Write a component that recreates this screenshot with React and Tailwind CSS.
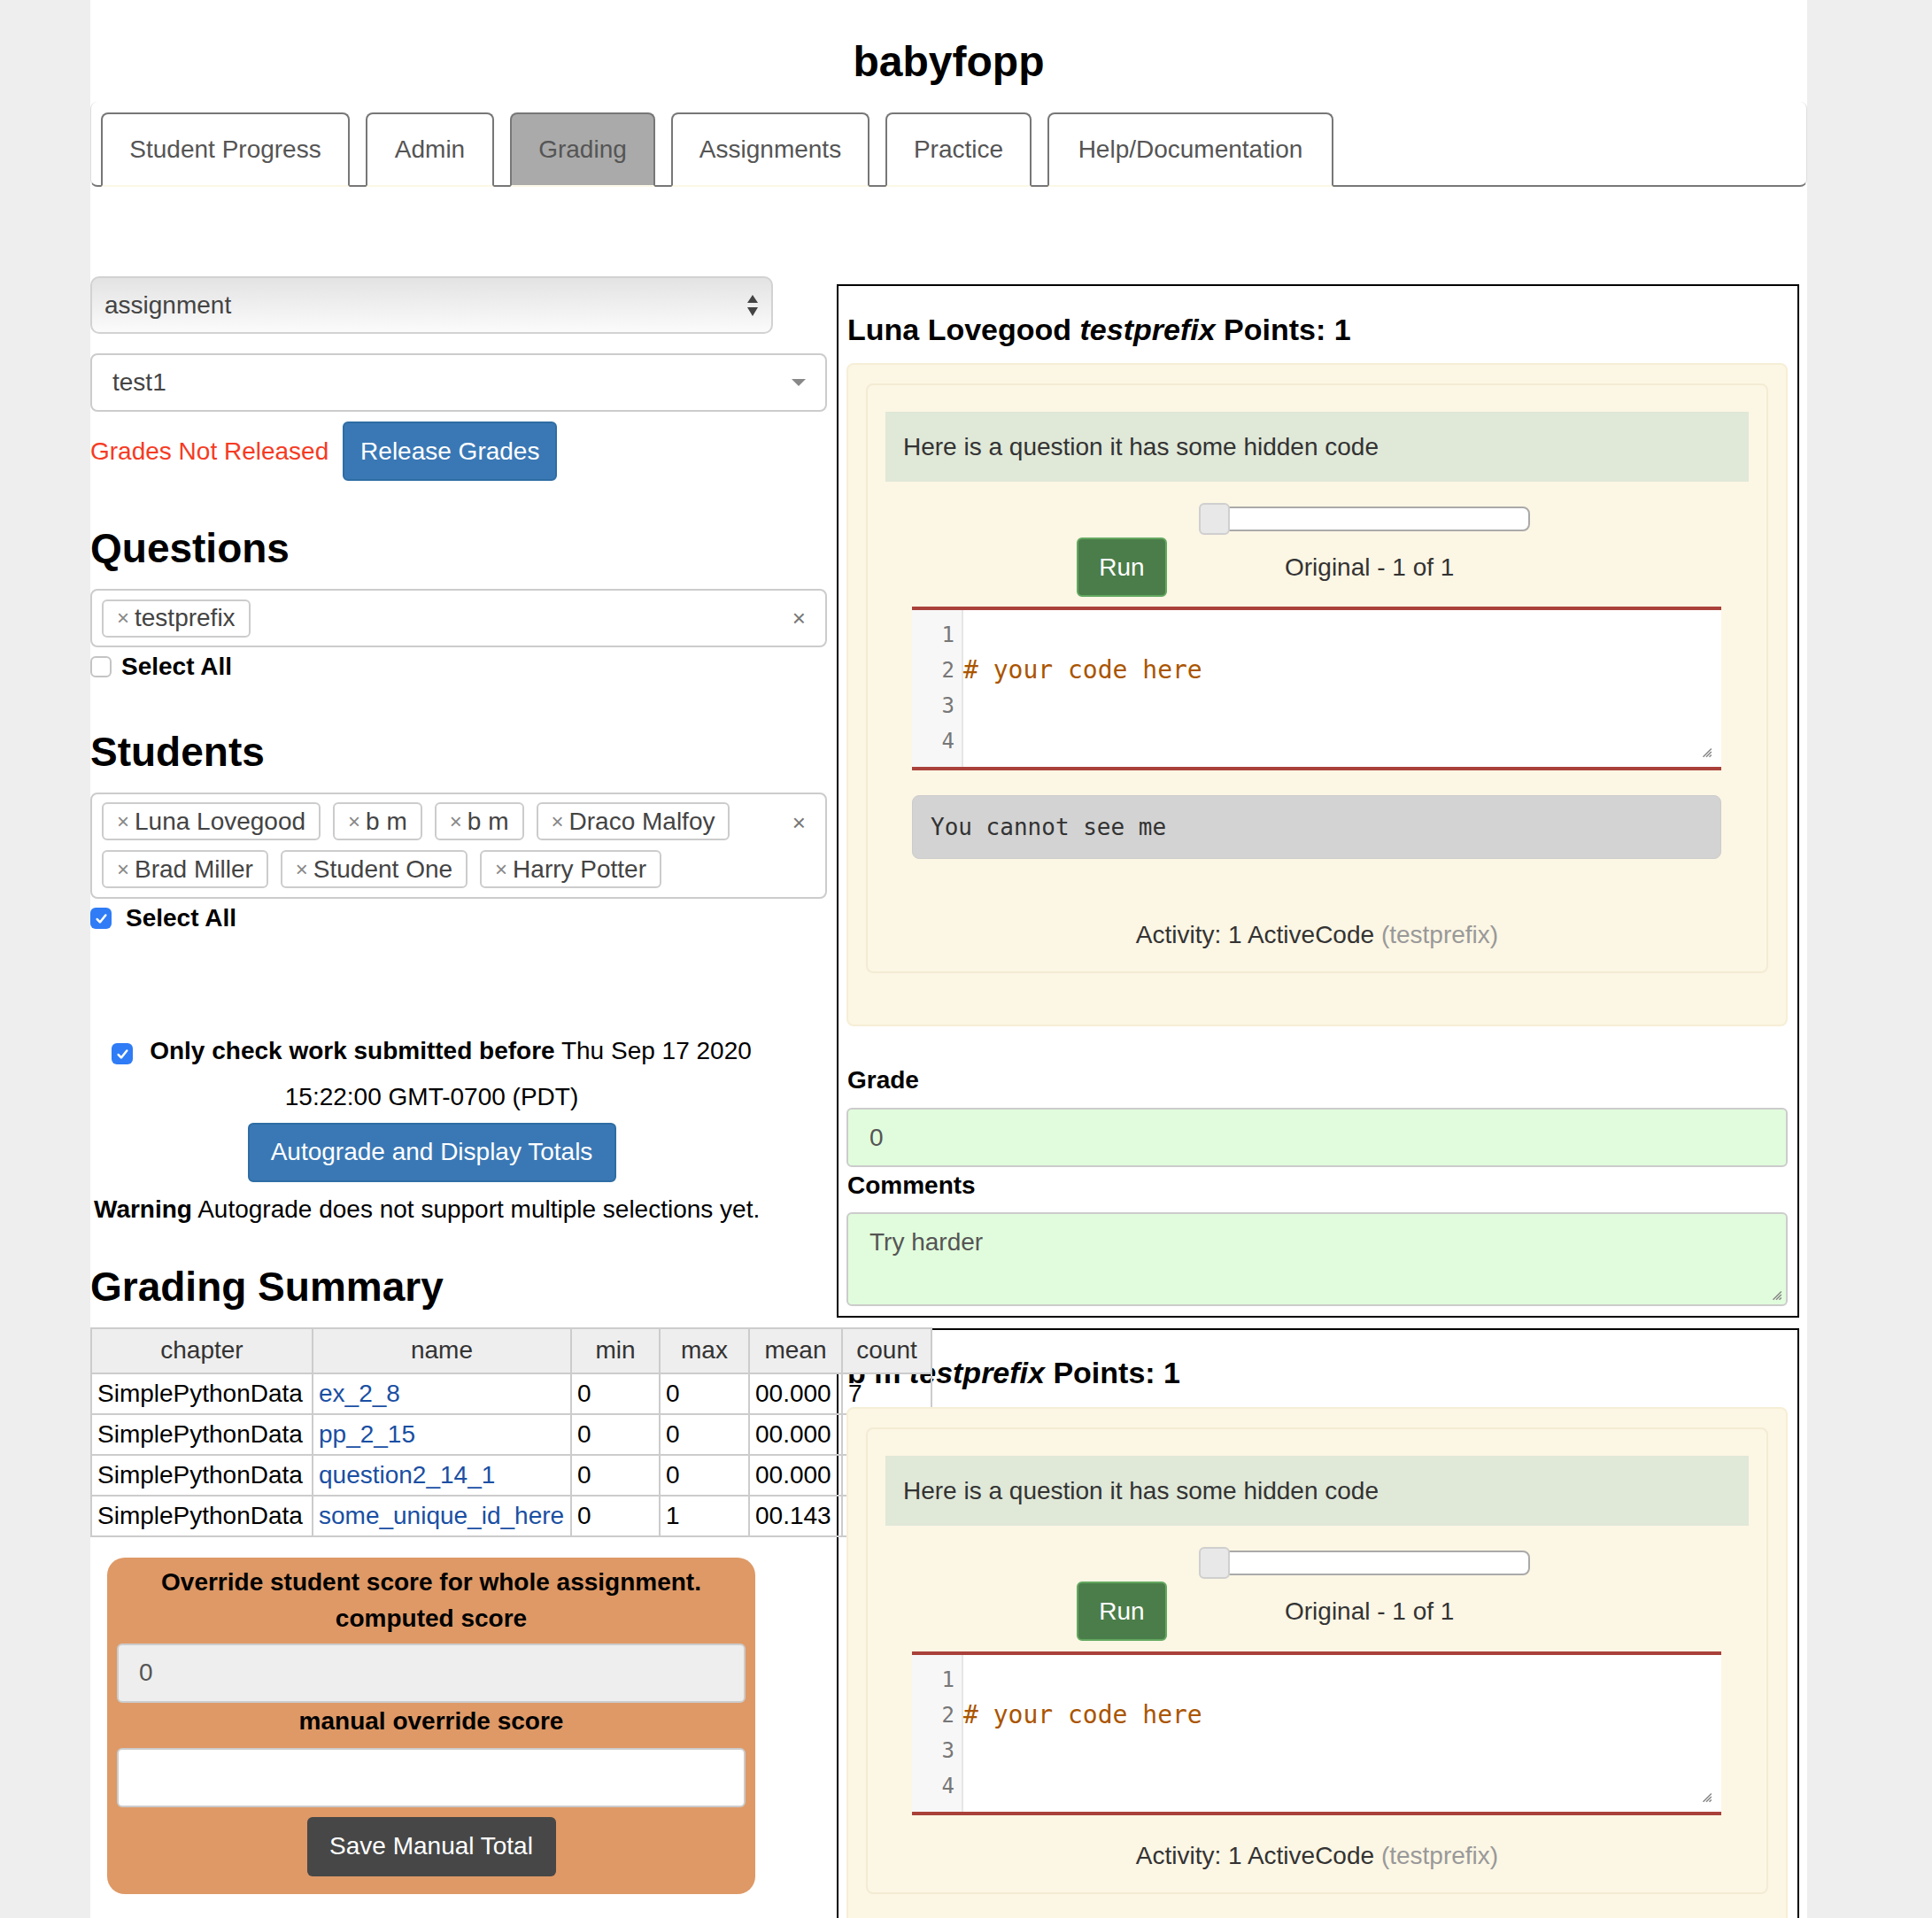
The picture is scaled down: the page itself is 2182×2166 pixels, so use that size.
import React from "react";

const tabs = [
  ["Student Progress", "w-[281px]"],
  ["Admin", "w-[145px]"],
  ["Grading", "w-[164px]"],
  ["Assignments", "w-[224px]"],
  ["Practice", "w-[165px]"],
  ["Help/Documentation", "w-[323px]"],
];

const students = ["Luna Lovegood", "b m", "b m", "Draco Malfoy", "Brad Miller", "Student One", "Harry Potter"];

const rows = [
  ["SimplePythonData", "ex_2_8", "0", "0", "00.000", "7"],
  ["SimplePythonData", "pp_2_15", "0", "0", "00.000", "7"],
  ["SimplePythonData", "question2_14_1", "0", "0", "00.000", "7"],
  ["SimplePythonData", "some_unique_id_here", "0", "1", "00.143", "7"],
];

function Chip({ label }) {
  return (
    <span className="flex h-[43px] items-center rounded-[6px] border-2 border-[#ccc] bg-white px-[15px] leading-[40px] text-[#444]">
      <span className="mr-[6px] text-[24px] text-[#888]">×</span>
      {label}
    </span>
  );
}

function Check({ checked }) {
  if (checked) {
    return (
      <span className="inline-flex h-[24px] w-[24px] shrink-0 items-center justify-center rounded-[6px] bg-[#2f7cf6] align-middle">
        <svg viewBox="0 0 16 16" className="h-[17px] w-[17px]">
          <path d="M3.5 8.5l3 3.2 6-7.4" fill="none" stroke="white" strokeWidth="2.4" strokeLinecap="round" strokeLinejoin="round" />
        </svg>
      </span>
    );
  }
  return <span className="inline-block h-[24px] w-[24px] shrink-0 rounded-[6px] border-2 border-[#c4c4c4] bg-white align-middle" />;
}

function Grip({ className }) {
  return (
    <svg viewBox="0 0 12 12" className={className}>
      <path d="M11 3L3 11M11 6L6 11M11 9L9 11" stroke="#888" strokeWidth="1.3" fill="none" />
    </svg>
  );
}

function Editor({ mt }) {
  return (
    <div className={`${mt} ml-[30px] flex h-[185px] w-[914px] border-y-4 border-[#a9413a] bg-white`}>
      <div className="w-[58px] shrink-0 border-r-2 border-[#e6e6e6] bg-[#f7f7f7] pt-[8px] pr-[8px] text-right font-['DejaVu_Sans_Mono',monospace] text-[24px] leading-[40px] text-[#777]">
        <div>1</div>
        <div>2</div>
        <div>3</div>
        <div>4</div>
      </div>
      <div className="relative flex-1 pt-[8px] font-['DejaVu_Sans_Mono',monospace] text-[28px] leading-[40px] text-[#a50]">
        <div>&nbsp;</div>
        <div># your code here</div>
        <Grip className="absolute bottom-[10px] right-[10px] h-[14px] w-[14px]" />
      </div>
    </div>
  );
}

function Panel({ name, output, mt, titlePt, beigeMt, editorMt, activityMt }) {
  return (
    <div className={`${mt} w-[1087px] border-2 border-black pb-[11px]`}>
      <div className={`${titlePt} pl-[10px] text-[34px] font-bold leading-[44px] text-black`}>
        {name} <i>testprefix</i> Points: 1
      </div>
      <div className={`relative z-20 ${beigeMt} ml-[9px] w-[1063px] rounded-[8px] border-2 border-[#f6eed6] bg-[#fcf6e4]`}>
        <div className="mt-[21px] mb-[58px] ml-[20px] w-[1019px] rounded-[8px] border-2 border-[#f3ebd3] px-[20px] pt-[30px] pb-[21px]">
          <div className="flex h-[79px] items-center bg-[#e0e8d8] pl-[20px] text-[#333]">
            Here is a question it has some hidden code
          </div>
          <div className="mt-[24px] ml-[354px] flex h-[36px] items-center">
            <div className="relative z-10 h-[36px] w-[35px] rounded-[6px] border-2 border-[#cfcfcf] bg-[#e8e8e8]" />
            <div className="-ml-[35px] h-[28px] w-[374px] rounded-[8px] border-2 border-[#aaa] bg-white" />
          </div>
          <div className="mt-[3px] flex h-[67px] items-center">
            <button className="ml-[216px] h-[67px] w-[102px] rounded-[6px] border-2 border-[#63a860] bg-[#4b7d4a] text-white">
              Run
            </button>
            <span className="ml-[133px] text-[#333]">Original - 1 of 1</span>
          </div>
          <Editor mt={editorMt} />
          {output && (
            <div className="mt-[28px] ml-[30px] flex h-[72px] w-[914px] items-center rounded-[8px] border border-[#ccc] bg-[#d3d3d3] pl-[20px] font-['DejaVu_Sans_Mono',monospace] text-[26px] text-[#333]">
              You cannot see me
            </div>
          )}
          <div className={`${activityMt} text-center leading-[40px] text-[#333]`}>
            Activity: 1 ActiveCode <span className="text-[#999]">(testprefix)</span>
          </div>
        </div>
      </div>
      <div className="mt-[41px] pl-[10px] font-bold leading-[40px] text-black">Grade</div>
      <div className="mt-[11px] ml-[9px] flex h-[67px] w-[1063px] items-center rounded-[6px] border-2 border-[#ccc] bg-[#e1fcdc] pl-[24px] text-[#555]">
        0
      </div>
      <div className="mt-[1px] pl-[10px] font-bold leading-[40px] text-black">Comments</div>
      <div className="relative mt-[10px] ml-[9px] h-[106px] w-[1063px] rounded-[6px] border-2 border-[#ccc] bg-[#e1fcdc] pt-[12px] pl-[24px] leading-[40px] text-[#555]">
        Try harder
        <Grip className="absolute bottom-[4px] right-[4px] h-[14px] w-[14px]" />
      </div>
    </div>
  );
}

export default function App() {
  return (
    <div className="min-h-screen bg-[#eee] font-['Liberation_Sans',Arial,sans-serif] text-[28px] text-[#333]">
      <div className="ml-[102px] min-h-[2166px] w-[1939px] bg-white pb-[60px]">
        <h1 className="pt-[42px] text-center text-[48px] font-bold leading-[56px] text-black">babyfopp</h1>

        {/* tabs */}
        <ul className="mt-[17px] flex h-[96px] items-end gap-[18px] rounded-[8px] border-x border-b-2 border-x-[#ddd] border-b-[#777] pl-[11px]">
          {tabs.map(([t, w]) => (
            <li
              key={t}
              className={`-mb-[2px] flex h-[84px] ${w} items-center justify-center rounded-t-[8px] border-2 border-[#777] border-b-[#fcf8e6] leading-[40px] ${
                t === "Grading" ? "bg-[#aaa] text-[#555]" : "bg-white text-[#555]"
              }`}
            >
              {t}
            </li>
          ))}
        </ul>

        <div className="flex items-start">
          {/* left column */}
          <div className="w-[843px] shrink-0">
            <div className="mt-[101px] flex h-[65px] w-[771px] items-center justify-between rounded-[10px] border-2 border-[#d2d2d2] bg-linear-to-b from-[#e3e3e3] to-[#fbfbfb] pl-[14px] pr-[14px] text-[#444]">
              <span>assignment</span>
              <svg viewBox="0 0 14 26" className="h-[26px] w-[14px]">
                <path d="M7 1L13 10H1Z M1 15H13L7 25Z" fill="#444" />
              </svg>
            </div>

            <div className="mt-[22px] flex h-[66px] w-[832px] items-center justify-between rounded-[8px] border-2 border-[#ccc] pl-[23px] pr-[22px] text-[#444]">
              <span>test1</span>
              <svg viewBox="0 0 16 8" className="h-[8px] w-[16px]">
                <path d="M0 0H16L8 8Z" fill="#888" />
              </svg>
            </div>

            <div className="mt-[11px] flex h-[67px] items-center">
              <span className="text-[#f53b24]">Grades Not Released</span>
              <button className="ml-[16px] h-[67px] w-[242px] rounded-[6px] border-2 border-[#2e6da4] bg-[#3a78b5] text-white">
                Release Grades
              </button>
            </div>

            <h2 className="mt-[51px] text-[46px] font-bold leading-[50px] text-black">Questions</h2>
            <div className="mt-[21px] flex h-[66px] w-[832px] items-center justify-between rounded-[8px] border-2 border-[#ccc] pl-[11px] pr-[22px]">
              <Chip label="testprefix" />
              <span className="text-[26px] text-[#777]">×</span>
            </div>
            <div className="mt-[2px] flex h-[40px] items-center">
              <Check checked={false} />
              <span className="ml-[11px] font-bold text-black">Select All</span>
            </div>

            <h2 className="mt-[51px] text-[46px] font-bold leading-[50px] text-black">Students</h2>
            <div className="mt-[21px] flex h-[120px] w-[832px] items-start rounded-[8px] border-2 border-[#ccc] pt-[9px] pl-[11px] pr-[22px]">
              <div className="flex flex-1 flex-wrap gap-x-[14px] gap-y-[11px]">
                {students.map((s, i) => (
                  <Chip key={i} label={s} />
                ))}
              </div>
              <span className="mt-[4px] text-[26px] text-[#777]">×</span>
            </div>
            <div className="mt-[2px] flex h-[40px] items-center">
              <Check checked />
              <span className="ml-[16px] font-bold text-black">Select All</span>
            </div>

            <div className="mt-[105px] w-[771px] text-center leading-[50px] text-black">
              <span className="mr-[19px] inline-block align-middle">
                <Check checked />
              </span>
              <b>Only check work submitted before</b> Thu Sep 17 2020 15:22:00 GMT-0700 (PDT)
              <div className="mt-[4px] flex justify-center">
                <button className="h-[67px] w-[416px] rounded-[6px] border-2 border-[#2e6da4] bg-[#3a78b5] leading-[40px] text-white">
                  Autograde and Display Totals
                </button>
              </div>
            </div>

            <p className="mt-[11px] pl-[4px] leading-[40px] text-black">
              <b>Warning</b> Autograde does not support multiple selections yet.
            </p>

            <h2 className="mt-[42px] text-[46px] font-bold leading-[50px] text-black">Grading Summary</h2>

            <table className="relative z-10 mt-[21px] w-[949px] table-fixed text-black">
              <colgroup>
                <col className="w-[250px]" />
                <col className="w-[292px]" />
                <col className="w-[100px]" />
                <col className="w-[101px]" />
                <col className="w-[105px]" />
                <col className="w-[101px]" />
              </colgroup>
              <thead>
                <tr className="h-[51px] bg-[#eee] text-[#333]">
                  {["chapter", "name", "min", "max", "mean", "count"].map((h) => (
                    <th key={h} className="border-2 border-[#ccc] text-center font-normal">
                      {h}
                    </th>
                  ))}
                </tr>
              </thead>
              <tbody>
                {rows.map((r) => (
                  <tr key={r[1]} className="h-[46px]">
                    <td className="border-2 border-[#ccc] px-[6px] whitespace-nowrap">{r[0]}</td>
                    <td className="border-2 border-[#ccc] px-[6px] whitespace-nowrap text-[#1a4fa3]">{r[1]}</td>
                    <td className="border-2 border-[#ccc] px-[6px]">{r[2]}</td>
                    <td className="border-2 border-[#ccc] px-[6px]">{r[3]}</td>
                    <td className="border-2 border-[#ccc] px-[6px]">{r[4]}</td>
                    <td className="border-2 border-[#ccc] px-[6px]">{r[5]}</td>
                  </tr>
                ))}
              </tbody>
            </table>

            <div className="mt-[23px] ml-[19px] w-[732px] rounded-[20px] bg-[#de9967] px-[11px] pt-[7px] pb-[20px] text-center font-bold text-black">
              <div className="leading-[41px]">Override student score for whole assignment.</div>
              <div className="leading-[41px]">computed score</div>
              <div className="mt-[8px] flex h-[67px] items-center rounded-[6px] border-2 border-[#ccc] bg-[#eee] pl-[23px] font-normal text-[#555]">
                0
              </div>
              <div className="mt-[1px] leading-[40px]">manual override score</div>
              <div className="mt-[10px] h-[67px] rounded-[6px] border-2 border-[#ccc] bg-white" />
              <button className="mt-[11px] h-[67px] w-[281px] rounded-[6px] bg-[#474747] font-normal text-white">
                Save Manual Total
              </button>
            </div>
          </div>

          {/* right column */}
          <div className="shrink-0">
            <Panel
              name="Luna Lovegood"
              output
              mt="mt-[110px]"
              titlePt="pt-[27px]"
              beigeMt="mt-[16px]"
              editorMt="mt-[11px]"
              activityMt="mt-[66px]"
            />
            <Panel
              name="b m"
              output={false}
              mt="mt-[12px]"
              titlePt="pt-[26px]"
              beigeMt="mt-[17px]"
              editorMt="mt-[12px]"
              activityMt="mt-[26px]"
            />
          </div>
        </div>
      </div>
    </div>
  );
}
